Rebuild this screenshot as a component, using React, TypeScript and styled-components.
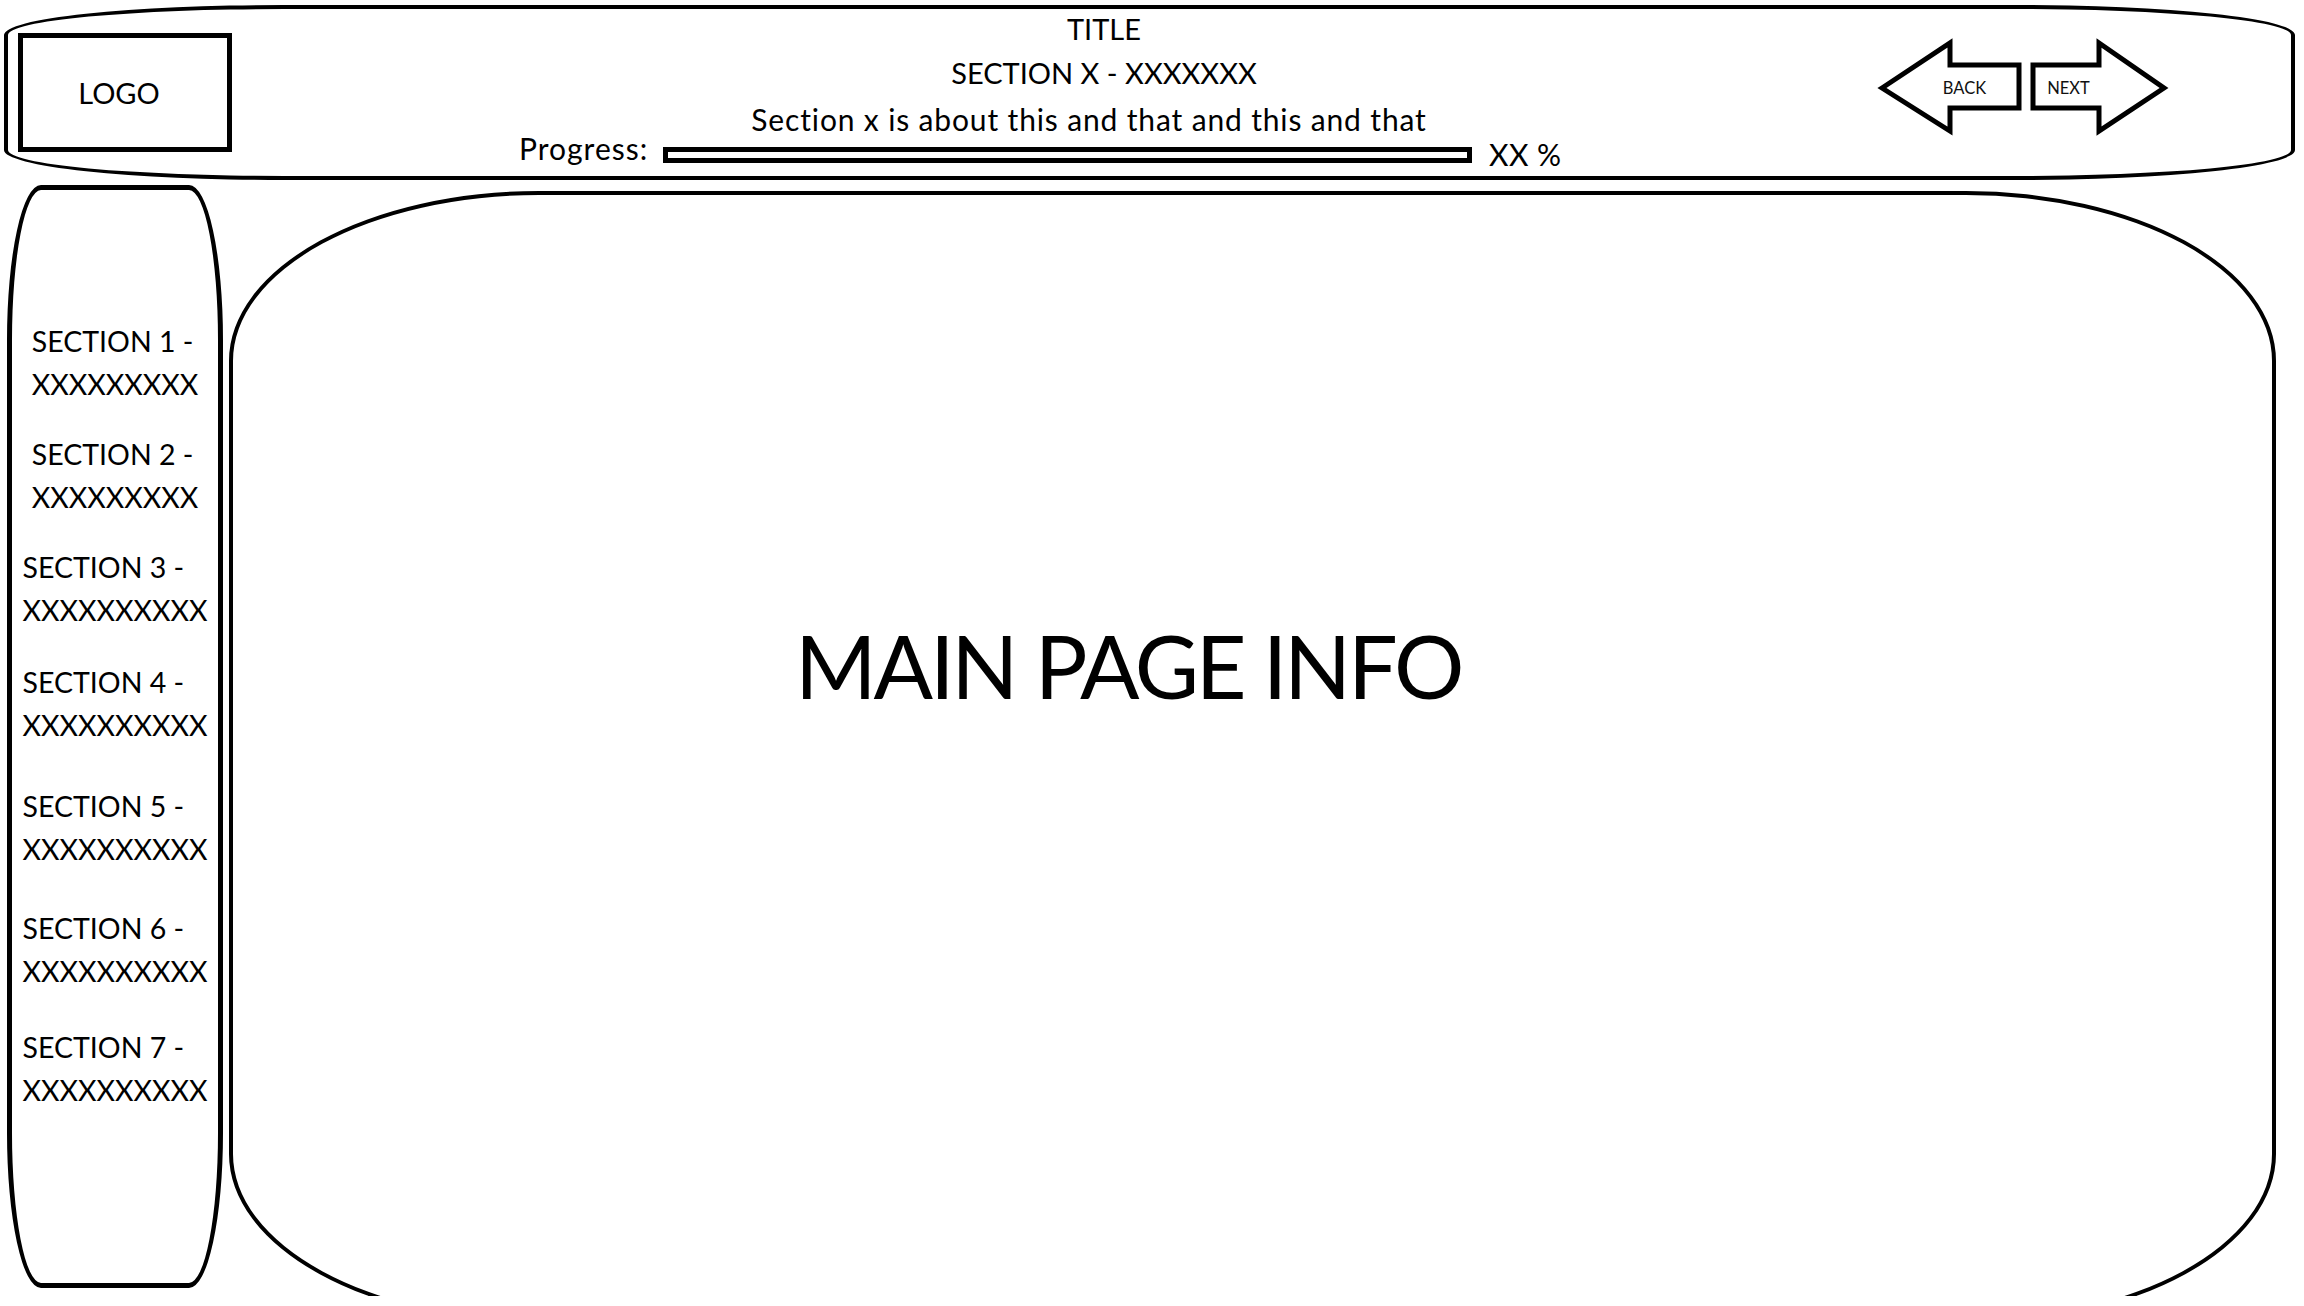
import React from "react";
import styled, { createGlobalStyle } from "styled-components";

const GlobalStyle = createGlobalStyle`
  html, body {
    margin: 0;
    padding: 0;
    background: #ffffff;
    overflow: hidden;
  }
  body {
    font-family: Lato, "Open Sans", "Noto Sans", sans-serif;
    color: #000000;
  }
`;

const Page = styled.div`
  box-sizing: border-box;
  width: 2304px;
  height: 1296px;
  padding: 5px 0 0 4px;
  display: flex;
  flex-direction: column;
  overflow: hidden;
`;

const Header = styled.header`
  box-sizing: border-box;
  width: 2291px;
  height: 175px;
  border: 4px solid #000;
  border-radius: 280px / 30px;
  display: flex;
  align-items: center;
  padding-left: 10px;
  flex-shrink: 0;
`;

const LogoBox = styled.div`
  box-sizing: border-box;
  width: 214px;
  height: 119px;
  border: 5px solid #000;
  display: flex;
  align-items: center;
  justify-content: center;
  padding-right: 12px;
  font-size: 29px;
  flex-shrink: 0;
`;

const CenterColumn = styled.div`
  align-self: stretch;
  margin-left: 287px;
  width: 1170px;
  display: flex;
  flex-direction: column;
  flex-shrink: 0;
`;

const HeadLine = styled.div<{ $h: number; $shift?: number; $size?: number; $spacing?: number }>`
  height: ${(p) => p.$h}px;
  line-height: ${(p) => p.$h}px;
  font-size: ${(p) => p.$size ?? 29}px;
  letter-spacing: ${(p) => p.$spacing ?? 0}px;
  text-align: center;
  white-space: nowrap;
  padding-right: ${(p) => (p.$shift ? p.$shift * 2 : 0)}px;
`;

const ProgressRow = styled.div`
  height: 28px;
  display: flex;
  align-items: center;
  font-size: 30px;
  white-space: nowrap;
`;

const ProgressLabel = styled.span`
  width: 144px;
  flex-shrink: 0;
  letter-spacing: 1px;
  margin-bottom: 14px;
`;

const ProgressTrack = styled.div`
  box-sizing: border-box;
  width: 809px;
  height: 16px;
  border: 5px solid #000;
  flex-shrink: 0;
`;

const Percent = styled.span`
  margin-left: 17px;
  margin-bottom: 2px;
  letter-spacing: 0.5px;
`;

const Nav = styled.nav`
  margin-left: auto;
  margin-right: 122px;
  align-self: flex-start;
  margin-top: 29px;
  display: flex;
  gap: 5px;
`;

const ArrowSvg = styled.svg`
  display: block;
  overflow: visible;
`;

const ArrowLabel = styled.text`
  font-family: Lato, "Open Sans", sans-serif;
  font-size: 16.5px;
  fill: #111;
`;

const Body = styled.div`
  margin-top: 5px;
  display: flex;
  align-items: flex-start;
`;

const Sidebar = styled.aside`
  box-sizing: border-box;
  margin-left: 3px;
  width: 216px;
  height: 1103px;
  border: 5px solid #000;
  border-radius: 34px / 155px;
  display: flex;
  flex-direction: column;
  align-items: center;
  padding-top: 130px;
  flex-shrink: 0;
`;

const SideItem = styled.div<{ $gap: number }>`
  margin-top: ${(p) => p.$gap}px;
  font-size: 28.5px;
  line-height: 43px;
  text-align: left;
  white-space: nowrap;
`;

const Main = styled.main`
  box-sizing: border-box;
  margin-left: 6px;
  margin-top: 6px;
  width: 2047px;
  height: 1133px;
  border: 4px solid #000;
  border-radius: 310px / 170px;
  padding: 426px 0 0 562px;
  flex-shrink: 0;
`;

const MainText = styled.div`
  font-size: 88px;
  line-height: 88px;
  white-space: nowrap;
  letter-spacing: -3.2px;
`;

const sections = [
  { n: 1, x: "XXXXXXXXX", gap: 0 },
  { n: 2, x: "XXXXXXXXX", gap: 27 },
  { n: 3, x: "XXXXXXXXXX", gap: 27 },
  { n: 4, x: "XXXXXXXXXX", gap: 29 },
  { n: 5, x: "XXXXXXXXXX", gap: 38 },
  { n: 6, x: "XXXXXXXXXX", gap: 36 },
  { n: 7, x: "XXXXXXXXXX", gap: 33 },
];

const BackArrow = () => (
  <ArrowSvg width="146" height="98" viewBox="0 0 146 98">
    <polygon
      points="4,50 72,5 72,27 141,27 141,70 72,70 72,93"
      fill="#fff"
      stroke="#000"
      strokeWidth="5"
      strokeLinejoin="miter"
    />
    <ArrowLabel x="86.5" y="56" textAnchor="middle">
      BACK
    </ArrowLabel>
  </ArrowSvg>
);

const NextArrow = () => (
  <ArrowSvg width="140" height="98" viewBox="0 0 140 98">
    <polygon
      points="4,27 70,27 70,5 135,50 70,93 70,70 4,70"
      fill="#fff"
      stroke="#000"
      strokeWidth="5"
      strokeLinejoin="miter"
    />
    <ArrowLabel x="39.5" y="56" textAnchor="middle">
      NEXT
    </ArrowLabel>
  </ArrowSvg>
);

export default function App() {
  return (
    <>
      <GlobalStyle />
      <Page>
        <Header>
          <LogoBox>LOGO</LogoBox>
          <CenterColumn>
            <HeadLine $h={40}>TITLE</HeadLine>
            <HeadLine $h={48}>SECTION X - XXXXXXX</HeadLine>
            <HeadLine $h={44} $shift={15} $size={30} $spacing={0.85}>
              Section x is about this and that and this and that
            </HeadLine>
            <ProgressRow>
              <ProgressLabel>Progress:</ProgressLabel>
              <ProgressTrack />
              <Percent>XX %</Percent>
            </ProgressRow>
          </CenterColumn>
          <Nav>
            <BackArrow />
            <NextArrow />
          </Nav>
        </Header>
        <Body>
          <Sidebar>
            {sections.map((s) => (
              <SideItem key={s.n} $gap={s.gap}>
                SECTION {s.n} -
                <br />
                {s.x}
              </SideItem>
            ))}
          </Sidebar>
          <Main>
            <MainText>MAIN PAGE INFO</MainText>
          </Main>
        </Body>
      </Page>
    </>
  );
}
